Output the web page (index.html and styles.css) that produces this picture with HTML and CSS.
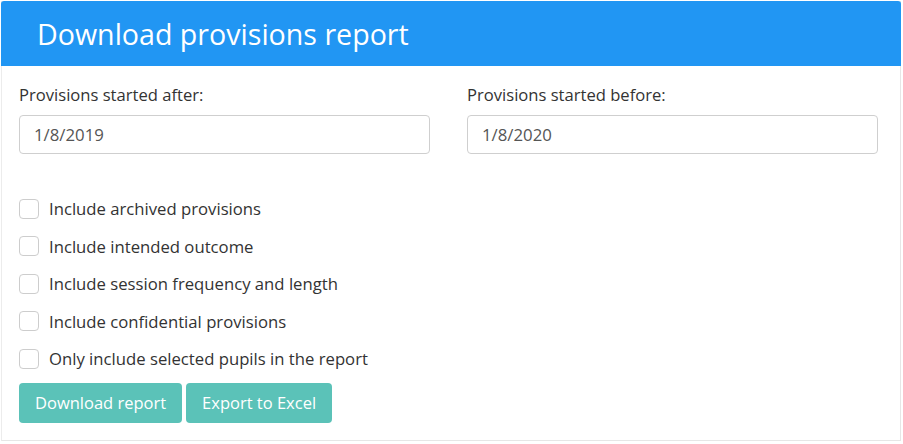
FILE: index.html
```html
<!DOCTYPE html>
<html>
<head>
<meta charset="utf-8">
<link rel="stylesheet" href="styles.css">
</head>
<body>
<div class="panel">
  <div class="panel-head">Download provisions report</div>
  <div class="panel-body">
    <div class="dates">
      <div class="field">
        <label class="field-label">Provisions started after:</label>
        <div class="input">1/8/2019</div>
      </div>
      <div class="field">
        <label class="field-label">Provisions started before:</label>
        <div class="input">1/8/2020</div>
      </div>
    </div>
    <div class="checks">
      <label class="check"><span class="box"></span>Include archived provisions</label>
      <label class="check"><span class="box"></span>Include intended outcome</label>
      <label class="check"><span class="box"></span>Include session frequency and length</label>
      <label class="check"><span class="box"></span>Include confidential provisions</label>
      <label class="check"><span class="box"></span>Only include selected pupils in the report</label>
    </div>
    <div class="actions">
      <button class="btn">Download report</button>
      <button class="btn">Export to Excel</button>
    </div>
  </div>
</div>
</body>
</html>
```
FILE: styles.css
```css
html, body {
  margin: 0;
  padding: 0;
  background: #fff;
}
body {
  padding: 1px 0 0 1px;
  font-family: "Open Sans", "Liberation Sans", sans-serif;
  color: #333;
}
.panel {
  width: 900px;
  height: 440px;
  box-sizing: border-box;
  border: 1px solid #e6e6e6;
  border-top: none;
  border-left-color: #ececec;
}
.panel-head {
  height: 65px;
  margin: 0 -1px 0 -1px;
  background: #2196f3;
  color: #fff;
  font-size: 28.6px;
  line-height: 65px;
  padding-left: 36px;
  border-radius: 3px 3px 0 0;
}
.panel-body {
  padding: 18px 0 0 17px;
}
.dates {
  display: grid;
  grid-template-columns: 411px 411px;
  column-gap: 37px;
}
.field-label {
  display: block;
  font-size: 16.6px;
  line-height: 22px;
  color: #333;
  margin-bottom: 9px;
}
.input {
  height: 39px;
  box-sizing: border-box;
  border: 1px solid #cfcfcf;
  border-radius: 4px;
  padding: 0 14px;
  font-size: 16.8px;
  line-height: 37px;
  color: #555;
}
.checks {
  margin-top: 36px;
  display: flex;
  flex-direction: column;
}
.check {
  display: flex;
  align-items: center;
  height: 37.5px;
  font-size: 16.7px;
  color: #333;
}
.box {
  width: 20px;
  height: 20px;
  box-sizing: border-box;
  border: 1px solid #cdcdcd;
  border-radius: 4px;
  margin-right: 10px;
  flex: none;
}
.actions {
  margin-top: 5px;
  display: flex;
  gap: 4px;
}
.btn {
  height: 40px;
  border: none;
  border-radius: 4px;
  background: #5bc2b8;
  color: #fff;
  font-family: "Open Sans", "Liberation Sans", sans-serif;
  font-size: 16.5px;
  padding: 0 16px;
}
```
